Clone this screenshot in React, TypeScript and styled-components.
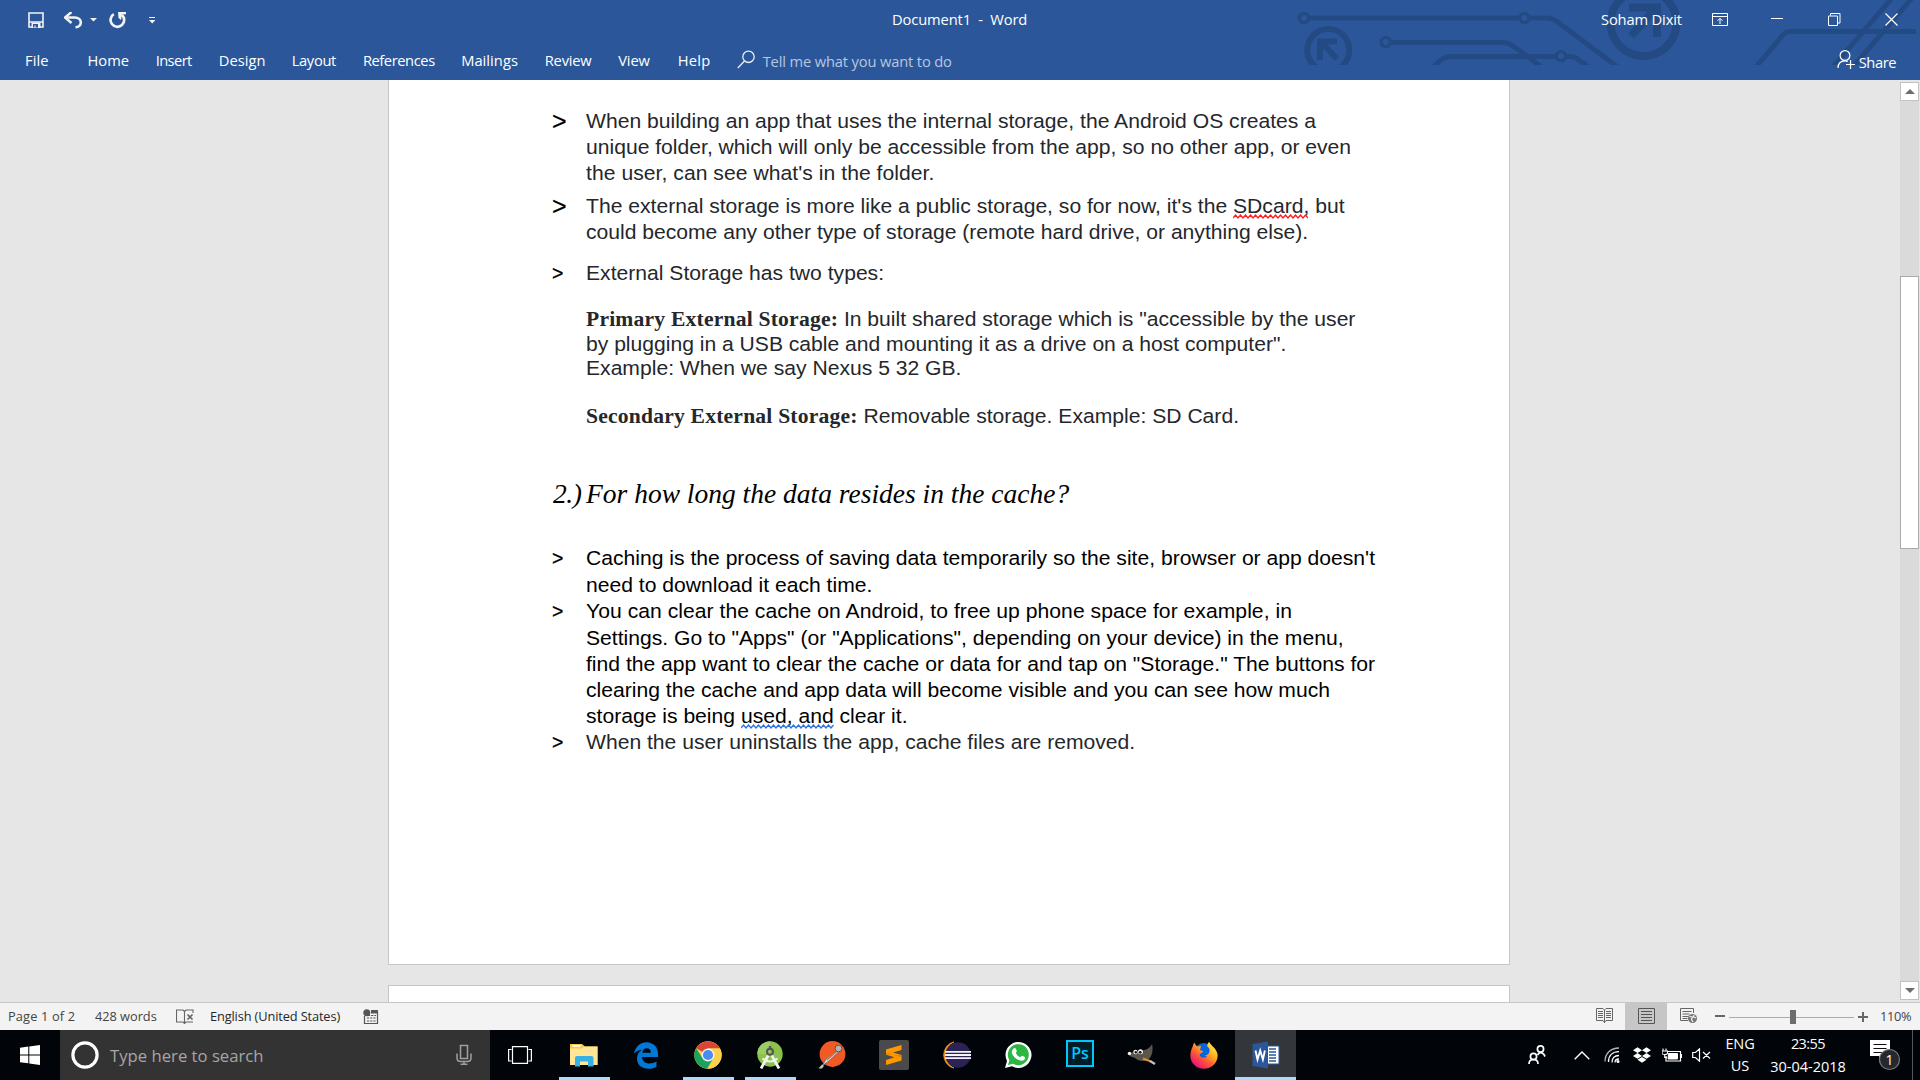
import React from "react";
import styled, { createGlobalStyle, css } from "styled-components";
import { FaDropbox } from "react-icons/fa";

const Global = createGlobalStyle`
  * { box-sizing: border-box; }
  html, body { margin: 0; padding: 0; overflow: hidden; background: #e6e6e6; }
  svg { display: block; flex: none; }
`;

const Screen = styled.div`
  width: 1920px;
  height: 1080px;
  display: grid;
  grid-template-rows: 80px 922px 28px 50px;
  overflow: hidden;
  font-family: "Open Sans", "Noto Sans", sans-serif;
`;

/* ---------- header ---------- */

const Header = styled.header`
  position: relative;
  display: grid;
  grid-template-rows: 39px 41px;
  background: #2b579a;
  color: #fff;
  font-size: 14.7px;
`;

const Circuit = styled.svg`
  position: absolute;
  left: 1290px;
  top: 0;
`;

const TitleBar = styled.div`
  position: relative;
  display: grid;
  grid-template-columns: 892px 709px 1fr;
  align-items: center;
  height: 38px;
`;

const QuickAccess = styled.div`
  display: flex;
  align-items: center;
  padding-left: 27px;
  margin-top: 2px;
`;

const Spacer = styled.div<{ $w: number }>`
  flex: none;
  width: ${(p) => p.$w}px;
`;

const Label = styled.span<{ $ls?: number; $size?: number; $dy?: number }>`
  white-space: pre;
  line-height: 20px;
  letter-spacing: ${(p) => p.$ls ?? 0}px;
  ${(p) => p.$size && css`font-size: ${p.$size}px;`}
  ${(p) => p.$dy && css`margin-top: ${p.$dy}px;`}
`;

const WindowControls = styled.div`
  display: flex;
  align-items: center;
`;

const TabRow = styled.nav`
  position: relative;
  display: flex;
  align-items: center;
  height: 40px;
  padding-left: 25px;
`;

const Tab = styled.span<{ $w: number; $ls: number }>`
  flex: none;
  width: ${(p) => p.$w}px;
  letter-spacing: ${(p) => p.$ls}px;
  line-height: 20px;
  white-space: nowrap;
  margin-top: 1px;
`;

const TellMe = styled.span`
  flex: none;
  width: 1081px;
  padding-left: 7px;
  margin-top: 3px;
  color: #b7c7e0;
  letter-spacing: -0.15px;
  line-height: 20px;
`;

/* ---------- document ---------- */

const Workspace = styled.main`
  display: grid;
  grid-template-columns: 388px 1122px 390px 20px;
  background: #e6e6e6;
  overflow: hidden;
`;

const Pages = styled.div`
  grid-column: 2;
  display: grid;
  grid-template-rows: 885px 17px;
  row-gap: 20px;
`;

const Page = styled.article<{ $next?: boolean }>`
  background: #fff;
  border: 1px solid #c6c6c6;
  ${(p) => (p.$next ? css`border-bottom: 0;` : css`border-top: 0; padding: 29px 0 0 164px;`)}
`;

const Entry = styled.section<{ $gap?: number; $color?: string }>`
  display: grid;
  grid-template-columns: 33px 1fr;
  margin-top: ${(p) => p.$gap ?? 0}px;
  color: ${(p) => p.$color ?? "#24272b"};
  font: 21.11px/24px "Liberation Sans", Arial, sans-serif;
`;

const Marker = styled.span<{ $large?: boolean }>`
  color: #000;
  margin-left: -1px;
  font-size: ${(p) => (p.$large ? 25 : 19.5)}px;
  line-height: ${(p) => (p.$large ? 24 : 25)}px;
  height: 24px;
  -webkit-text-stroke: 0.25px #000;
`;

const Text = styled.div`
  grid-column: 2;
`;

const Line = styled.div<{ $gap?: number; $ls?: number }>`
  height: 24px;
  white-space: nowrap;
  margin-top: ${(p) => p.$gap ?? 2}px;
  letter-spacing: ${(p) => p.$ls ?? 0}px;
  &:first-child { margin-top: 0; }
`;

const Term = styled.b`
  font: bold 21.6px/1 "Liberation Serif", "Times New Roman", serif;
  letter-spacing: 0.2px;
`;

const Heading = styled.h1`
  display: grid;
  grid-template-columns: 33px 1fr;
  margin: 51px 0 0;
  height: 30px;
  color: #000;
  font: italic 27.5px/30px "Liberation Serif", "Times New Roman", serif;
  white-space: nowrap;
`;

const HeadingNumber = styled.span`
  letter-spacing: -0.4px;
`;

const Proofed = styled.span`
  position: relative;
`;

const Wave = styled.svg`
  position: absolute;
  left: 0;
  top: 20px;
`;

const Scrollbar = styled.div`
  grid-column: 4;
  display: grid;
  grid-template-rows: 19px 1fr 19px;
  width: 19px;
  margin: 2px 0 2px;
  background: #dadada;
`;

const ScrollButton = styled.div`
  display: grid;
  place-items: center;
  background: #fff;
  border: 1px solid #c2c2c2;
`;

const Thumb = styled.div`
  height: 273px;
  margin-top: 175px;
  background: #fff;
  border: 1px solid #ababab;
`;

/* ---------- status bar ---------- */

const StatusBar = styled.footer`
  display: flex;
  align-items: center;
  background: #f3f3f3;
  border-top: 1px solid #c6c6c6;
  padding-left: 8px;
  color: #444;
  font-size: 12.8px;
`;

const StatusItem = styled.span<{ $w: number; $ls?: number; $dark?: boolean }>`
  flex: none;
  width: ${(p) => p.$w}px;
  margin-top: -2px;
  letter-spacing: ${(p) => p.$ls ?? 0}px;
  line-height: 20px;
  white-space: nowrap;
  color: ${(p) => (p.$dark ? "#262626" : "#444")};
`;

const ViewButton = styled.div<{ $active?: boolean }>`
  flex: none;
  width: 42px;
  height: 27px;
  display: grid;
  place-items: center;
  padding-bottom: 2px;
  background: ${(p) => (p.$active ? "#c6c6c6" : "transparent")};
`;

const Zoomer = styled.div`
  flex: none;
  display: flex;
  align-items: center;
  width: 165px;
  margin-left: 6px;
`;

/* ---------- taskbar ---------- */

const Taskbar = styled.div`
  display: flex;
  background: #010408;
  color: #fff;
`;

const Start = styled.div`
  width: 60px;
  display: grid;
  place-items: center;
`;

const Search = styled.div`
  width: 430px;
  display: flex;
  align-items: center;
  padding-left: 10px;
  background: #333;
  color: #a6a6a6;
  font-size: 16.7px;
`;

const SearchText = styled.span`
  width: 356px;
  padding-left: 10px;
`;

const TaskButton = styled.div<{ $open?: boolean; $active?: boolean; $w?: number }>`
  position: relative;
  flex: none;
  width: ${(p) => p.$w ?? 62}px;
  display: grid;
  place-items: center;
  background: ${(p) => (p.$active ? "#33373b" : "transparent")};
  &::after {
    content: "";
    display: ${(p) => (p.$open || p.$active ? "block" : "none")};
    position: absolute;
    bottom: 0;
    left: ${(p) => (p.$active ? 0 : 6)}px;
    right: ${(p) => (p.$active ? 0 : 5)}px;
    height: 3px;
    background: #a9dcfb;
  }
`;

const TaskView = styled(TaskButton)`
  padding-right: 3px;
`;

const Tray = styled.div`
  display: flex;
  align-items: center;
  margin-left: 228px;
`;

const TrayIcon = styled.div<{ $w: number }>`
  flex: none;
  width: ${(p) => p.$w}px;
  display: grid;
  place-items: center;
`;

const TrayText = styled.div<{ $w: number }>`
  flex: none;
  width: ${(p) => p.$w}px;
  display: flex;
  flex-direction: column;
  align-items: center;
  font-size: 14.7px;
  line-height: 22px;
  white-space: nowrap;
`;

const Peek = styled.div`
  width: 1px;
  height: 50px;
  margin-left: 11px;
  background: #55585c;
`;

const PsTile = styled.div`
  width: 28px;
  height: 27px;
  margin-top: -3px;
  border: 2px solid #00c8ff;
  background: #001d26;
  color: #00c8ff;
  font: 600 16px/22px "Open Sans", sans-serif;
  text-align: center;
`;

const tabs: [string, number, number][] = [
  ["File", 62.5, 0.1], ["Home", 68.2, 0], ["Insert", 63, -0.6], ["Design", 73, 0.05],
  ["Layout", 71.2, -0.33], ["References", 98.3, -0.42], ["Mailings", 83.6, 0.04],
  ["Review", 73.4, -0.22], ["View", 59.5, -0.1], ["Help", 59, 0.3],
];

function Squiggle({ w, color }: { w: number; color: string }) {
  let d = "M0 4";
  for (let x = 2.5, up = true; x <= w; x += 2.5, up = !up) d += `L${x} ${up ? 1 : 4}`;
  return (
    <Wave width={w} height="5">
      <path d={d} fill="none" stroke={color} strokeWidth="1.25" />
    </Wave>
  );
}

function HeaderArt() {
  return (
    <Circuit width="630" height="65" viewBox="1290 0 630 65" fill="none" stroke="#244a84" strokeWidth="5">
      <circle cx="1304" cy="18" r="4.6" strokeWidth="3.4" />
      <circle cx="1524.5" cy="18" r="4.6" strokeWidth="3.4" />
      <path d="M1309 18H1520M1529 18H1546Q1553 18 1559 23L1619 68" />
      <circle cx="1385.7" cy="42" r="4.6" strokeWidth="3.4" />
      <path d="M1391 42.5H1503Q1508 42.5 1513 46L1543 68M1432 68L1441 60Q1446 56.5 1451 56.5H1556" />
      <circle cx="1561" cy="56" r="4.6" strokeWidth="3.4" />
      <path d="M1566 56.5H1570Q1575 56.5 1579 60L1590 68" />
      <circle cx="1328.3" cy="50" r="21" strokeWidth="6" />
      <path d="M1320 60V41.5H1337M1321 42L1337 59" strokeWidth="6" />
      <circle cx="1643.5" cy="23" r="33" strokeWidth="8" />
      <path d="M1629 7.5H1657V37M1656 8L1631 36" strokeWidth="8" />
      <path d="M1755 68L1783 35Q1786 31.5 1790 31.5H1916M1832 68L1892 -2M1852 68L1912 -2" />
    </Circuit>
  );
}

const stroke = { fill: "none", stroke: "#fff", strokeWidth: 1.2 };

function Bullet({ large, gap, color, children }: { large?: boolean; gap?: number; color?: string; children: React.ReactNode }) {
  return (
    <Entry $gap={gap} $color={color}>
      <Marker $large={large}>&gt;</Marker>
      <Text>{children}</Text>
    </Entry>
  );
}

export default function App() {
  return (
    <Screen>
      <Global />
      <Header>
        <HeaderArt />
        <TitleBar>
          <QuickAccess>
            <svg width="18" height="18" viewBox="0 0 18 18"><path d="M2 2h14v14H2zM2 11h14" fill="none" stroke="#f3f3f3" strokeWidth="1.6" /><path d="M4.5 11.5h9V17h-9z" fill="#f3f3f3" /><path d="M6 13h5v3.5H8.5V14.2H7.5v2.3H6z" fill="#2b579a" /></svg>
            <Spacer $w={19} />
            <svg width="19" height="17" viewBox="0 0 19 17"><path d="M2 5.5h8.5c8.5 0 8 9.500 1 9.800" fill="none" stroke="#f3f3f3" strokeWidth="2.6" /><path d="M7.500 0L1 5.500l6.500 5.500" fill="none" stroke="#f3f3f3" strokeWidth="2.400" /></svg>
            <Spacer $w={7} />
            <svg width="7" height="4"><path d="M0 0h7L3.500 3.500z" fill="#f3f3f3" /></svg>
            <Spacer $w={12} />
            <svg width="18" height="17" viewBox="0 0 18 17"><path d="M4.800 2.200A6.800 6.800 0 1 0 13 3" fill="none" stroke="#f3f3f3" strokeWidth="2.700" /><path d="M9 0h8v2.200l-4 .3-1 5.500L9.500 6z" fill="#f3f3f3" /></svg>
            <Spacer $w={22} />
            <svg width="7" height="7"><path d="M0 .5h6" stroke="#f3f3f3" /><path d="M0 3h6.500L3.200 6.500z" fill="#f3f3f3" /></svg>
          </QuickAccess>
          <Label $ls={-0.12}>{"Document1  -  Word"}</Label>
          <WindowControls>
            <Label $ls={-0.15}>Soham Dixit</Label>
            <Spacer $w={30} />
            <svg width="16" height="13" viewBox="0 0 16 13" {...stroke} strokeWidth="1"><path d="M.5 .5h15v12H.5zM.5 3.500h15M8 11V5.500M5.500 7.800L8 5.300l2.500 2.500" /></svg>
            <Spacer $w={43} />
            <svg width="12" height="2"><path d="M0 .5h12" stroke="#fff" /></svg>
            <Spacer $w={45} />
            <svg width="13" height="13" {...stroke} strokeWidth="1"><path d="M.5 3h9v9.500h-9zM2.500 2.500v-2h9.500v9.500h-2" /></svg>
            <Spacer $w={44} />
            <svg width="13" height="13" {...stroke}><path d="M.5 .5l12 12M12.500 .5l-12 12" /></svg>
          </WindowControls>
        </TitleBar>
        <TabRow>
          {tabs.map(([t, w, ls]) => <Tab key={t} $w={w} $ls={ls}>{t}</Tab>)}
          <svg width="19" height="19" viewBox="0 0 19 19" fill="none" stroke="#e9eef6" strokeWidth="1.300"><circle cx="11.500" cy="6.800" r="5.700" /><path d="M7.500 11L.8 18" /></svg>
          <TellMe>Tell me what you want to do</TellMe>
          <svg width="19" height="19" viewBox="0 0 19 19" fill="none" stroke="#fff" strokeWidth="1.200"><circle cx="8" cy="5.500" r="4.900" /><path d="M1 18C1 13 4 10.800 8 10.800c1 0 2 .2 2.800 .7M13.500 10v9M9 14.500h9" /></svg>
          <Spacer $w={3} />
          <Label $ls={-0.4} $dy={5}>Share</Label>
        </TabRow>
      </Header>

      <Workspace>
        <Pages>
          <Page>
            <Bullet large>
              <Line>When building an app that uses the internal storage, the Android OS creates a</Line>
              <Line>unique folder, which will only be accessible from the app, so no other app, or even</Line>
              <Line $ls={0.045}>the user, can see what's in the folder.</Line>
            </Bullet>
            <Bullet large gap={9}>
              <Line>The external storage is more like a public storage, so for now, it's the <Proofed>SDcard,<Squiggle w={75} color="#ff1a1a" /></Proofed> but</Line>
              <Line $ls={-0.01}>could become any other type of storage (remote hard drive, or anything else).</Line>
            </Bullet>
            <Bullet gap={17}>
              <Line>External Storage has two types:</Line>
            </Bullet>
            <Entry $gap={22}>
              <Text>
                <Line $ls={-0.01}><Term>Primary External Storage:</Term> In built shared storage which is "accessible by the user</Line>
                <Line $gap={1} $ls={-0.01}>by plugging in a USB cable and mounting it as a drive on a host computer".</Line>
                <Line $gap={0}>Example: When we say Nexus 5 32 GB.</Line>
              </Text>
            </Entry>
            <Entry $gap={24}>
              <Text>
                <Line><Term>Secondary External Storage:</Term> Removable storage. Example: SD Card.</Line>
              </Text>
            </Entry>
            <Heading><HeadingNumber>2.)</HeadingNumber><span>For how long the data resides in the cache?</span></Heading>
            <Bullet gap={37} color="#000">
              <Line>Caching is the process of saving data temporarily so the site, browser or app doesn't</Line>
              <Line $gap={3}>need to download it each time.</Line>
            </Bullet>
            <Bullet gap={2} color="#000">
              <Line $ls={0.035}>You can clear the cache on Android, to free up phone space for example, in</Line>
              <Line $gap={3}>Settings. Go to "Apps" (or "Applications", depending on your device) in the menu,</Line>
              <Line>find the app want to clear the cache or data for and tap on "Storage." The buttons for</Line>
              <Line>clearing the cache and app data will become visible and you can see how much</Line>
              <Line>storage is being <Proofed>used, and<Squiggle w={94} color="#2f6fe0" /></Proofed> clear it.</Line>
            </Bullet>
            <Bullet gap={2}>
              <Line>When the user uninstalls the app, cache files are removed.</Line>
            </Bullet>
          </Page>
          <Page $next />
        </Pages>
        <Scrollbar>
          <ScrollButton><svg width="10" height="5"><path d="M5 0l5 5H0z" fill="#6d6d6d" /></svg></ScrollButton>
          <div><Thumb /></div>
          <ScrollButton><svg width="10" height="5"><path d="M0 0h10L5 5z" fill="#6d6d6d" /></svg></ScrollButton>
        </Scrollbar>
      </Workspace>

      <StatusBar>
        <StatusItem $w={87} $ls={0.15}>Page 1 of 2</StatusItem>
        <StatusItem $w={80.500} $ls={-0.04}>428 words</StatusItem>
        <svg width="18" height="16" viewBox="0 0 18 16" fill="none" stroke="#666" strokeWidth="1.100"><path d="M8.500 2.500L7 1H.5v12H7l1.500 1.500L10 13h7M8.500 2.500V15M8.500 2.500L10 1h7v3" /><path d="M11.500 5.500l5 5M16.500 5.500l-5 5" strokeWidth="1.700" /></svg>
        <Spacer $w={16.500} />
        <StatusItem $w={153} $ls={-0.13} $dark>English (United States)</StatusItem>
        <svg width="16" height="16" viewBox="0 0 16 16"><path d="M1.500 7v7.500h13V3" fill="none" stroke="#555" strokeWidth="1.200" /><circle cx="3.800" cy="3.800" r="3.500" fill="#555" /><path d="M8 1h7v3.500H8z" fill="#555" /><path d="M4 9h9M4 12h9M5 6.500h8" stroke="#555" strokeWidth="1.200" strokeDasharray="2.200 1" /></svg>
        <Spacer $w={1204} />
        <ViewButton><svg width="17" height="16" viewBox="0 0 17 16" fill="none" stroke="#666" strokeWidth="1"><path d="M8.500 2L7 .5H.5v12H7L8.500 14.500 10 12.500h6.500V.5H10zM8.500 2v13M2 3.500h5M2 5.500h5M2 7.500h5M2 9.500h5M10 3.500h5M10 5.500h5M10 7.500h5M10 9.500h5" /></svg></ViewButton>
        <ViewButton $active><svg width="17" height="16" fill="none" stroke="#555" strokeWidth="1"><path d="M.5 .5h16v15H.5zM3 3.500h11M3 6.500h11M3 9.500h11M3 12.500h11" /></svg></ViewButton>
        <ViewButton><svg width="17" height="16" viewBox="0 0 17 16"><path d="M8 12.500H.5V.5h13V5M2.500 3.500h9M2.500 6h7M2.500 8.500h6M2.500 10.500h5" fill="none" stroke="#666" /><circle cx="12.500" cy="10.500" r="4.500" fill="#777" /><path d="M9.500 8.500l3 .5-1 2.500 1.500 2.500M14 7l-.5 2 2.500 1" stroke="#f3f3f3" strokeWidth="1.200" fill="none" /></svg></ViewButton>
        <Zoomer>
          <svg width="154" height="16"><path d="M0 7h10M143 8h10M148 3v10" stroke="#666" strokeWidth="2" /><path d="M14 8.500h125" stroke="#ababab" /><path d="M75 1h6v14h-6z" fill="#6d6d6d" /></svg>
        </Zoomer>
        <StatusItem $w={34} $ls={-0.35}>110%</StatusItem>
      </StatusBar>

      <Taskbar>
        <Start>
          <svg width="20" height="20" fill="#fff"><path d="M0 2.800l8.300-1.200v7.800H0zM9.300 1.400L20 0v9.400H9.300zM0 10.400h8.300v7.900L0 17.200zM9.300 10.400H20V20L9.300 18.500z" /></svg>
        </Start>
        <Search>
          <svg width="30" height="30"><circle cx="15" cy="15" r="12.100" fill="none" stroke="#fff" strokeWidth="3.200" /></svg>
          <SearchText>Type here to search</SearchText>
          <svg width="16" height="22" viewBox="0 0 16 22" fill="none" stroke="#a0a0a0" strokeWidth="1.500"><path d="M4.500 1.500h7v13h-7zM1 9.500v4.500q0 3.500 3.500 3.500h7q3.500 0 3.500-3.500V9.500M8 17.500V20M4.500 20.300h7" /></svg>
        </Search>
        <TaskView $w={63}>
          <svg width="24" height="18" {...stroke}><path d="M4.500 .6h15v16.800h-15zM3.500 3.500H.6v11.500h2.900M20.500 3.500h2.900v11.500h-2.900" /></svg>
        </TaskView>
        <TaskButton $open>
          <svg width="28" height="24" viewBox="0 0 28 24"><path d="M0 1h12l3 2.500h12.500V22H0z" fill="#f5cb47" /><path d="M2.500 2h8v1.800h-8z" fill="#fff" /><path d="M0 5.500h12l2-2h13.500V22H0z" fill="#ffe694" /><path d="M5 23.500V15q0-2 2-2h14.500q2 0 2 2v8.500H18v-5h-8v5z" fill="#35b1e6" /></svg>
        </TaskButton>
        <TaskButton>
          <svg width="26" height="27" viewBox="0 0 26 27"><path d="M1 12C2.200 4.500 7.500 .3 13.500 .3c7 0 11.500 5 11.500 11.200V15H9c.3 4.500 3.800 6.500 7.500 6.500 2.700 0 5-.7 7-1.900v5.200c-2.300 1.400-5 2-8 2C8.500 26.800 4 22.500 4 16.500 4 12.500 6 9.500 9 7.700 5.500 8 2.500 9.500 1 12zM9.300 10.800h8.600c0-3-1.500-4.600-4.200-4.600-2.300 0-4 1.800-4.400 4.600z" fill="#0078d7" /></svg>
        </TaskButton>
        <TaskButton $open>
          <svg width="28" height="28" viewBox="0 0 28 28"><circle cx="14" cy="14" r="13.700" fill="#fbd04b" /><path d="M14 14L2.100 7.200A13.700 13.700 0 0 1 25.900 7.500H14z" fill="#dc4437" /><path d="M2.100 7.200A13.700 13.700 0 0 0 13.300 27.700L19.500 17 8.500 17z" fill="#1ba261" /><path d="M25.900 7.500H14L19.800 17 13.300 27.700A13.700 13.700 0 0 0 25.900 7.500z" fill="#fdd14c" /><circle cx="14" cy="14" r="6.500" fill="#f5f5f5" /><circle cx="14" cy="14" r="5.100" fill="#4c8bf5" /></svg>
        </TaskButton>
        <TaskButton $open>
          <svg width="28" height="28" viewBox="0 0 28 28"><circle cx="14" cy="13" r="12.700" fill="#8bc34a" /><path d="M14 .3A12.700 12.700 0 0 0 1.300 13H14z" fill="#9ccc65" /><path d="M12.500 14L5 27.500M15.500 14L23 27.500" stroke="#f2f2f2" strokeWidth="2.800" /><path d="M6.500 17.500q7.500 6 15 0" fill="none" stroke="#f2f2f2" strokeWidth="2" /><path d="M12.800 5h2.400v4h-2.400z" fill="#555" /><circle cx="14" cy="10.800" r="3" fill="none" stroke="#555" strokeWidth="2" /></svg>
        </TaskButton>
        <TaskButton>
          <svg width="28" height="28" viewBox="0 0 28 28"><circle cx="14.500" cy="13" r="12.900" fill="#f15a24" /><path d="M20 8.500L8 18l-4 7 7-5 10-9.500z" fill="#d8d8d8" stroke="#666" strokeWidth=".8" /><path d="M18.500 10.500L9 19" stroke="#f15a24" strokeWidth="1.200" /><path d="M.5 27.500l3.500-4 2 1.500-2 2.500z" fill="#c9c2bb" /><circle cx="20.500" cy="7.500" r="3.400" fill="#b5b5b5" stroke="#555" strokeWidth="1" /></svg>
        </TaskButton>
        <TaskButton>
          <svg width="30" height="30"><rect width="30" height="30" rx="2" fill="#4a4a4a" /><path d="M7 9.500L22.500 5v5L14 12.500l8.500 2.500v5.500L7 25v-5l8.500-2.700L7 14.800z" fill="#ff9800" /><path d="M7 14.800v-2l15.500 4.700V15z" fill="#c87300" opacity=".5" /></svg>
        </TaskButton>
        <TaskButton>
          <svg width="30" height="28" viewBox="0 0 30 28"><path d="M13 .8A13.600 13.600 0 0 0 13 27.200 15 15 0 0 1 13 .8z" fill="#f7941e" stroke="#f7941e" strokeWidth=".8" /><circle cx="17" cy="14" r="12.700" fill="#2c2255" /><path d="M4 10.800h26M4 14h26M4 17.200h26" stroke="#f4f2fa" strokeWidth="1.800" /></svg>
        </TaskButton>
        <TaskButton>
          <svg width="28" height="28" viewBox="0 0 28 28"><path d="M1 27l2-7A13 13 0 1 1 8 25.200z" fill="#fff" /><path d="M4 24l1.400-4.800a10.500 10.500 0 1 1 3.600 3.500z" fill="#2bb741" /><path d="M9.500 7.500c1-1 2-.7 2.400 .3l.9 2.200c.2 .7-1.100 1.700-1 2 1 2 2.300 3.300 4.400 4.100 .5 .2 1.500-1.600 2.200-1.300l2.300 1.100c1 .5 .3 2.700-1 3.400C15.500 21.500 7 15 7.800 10.500c.2-1.200 .9-2.200 1.700-3z" fill="#fff" /></svg>
        </TaskButton>
        <TaskButton><PsTile>Ps</PsTile></TaskButton>
        <TaskButton>
          <svg width="30" height="24" viewBox="0 0 30 24"><path d="M25 1c1.500 6 0 12-3 15-4 3.500-11 2-14-1-3-1-6-2-6-4 1-1 4-1 6-4 2 3 4 .5 6 .5 5 0 9-2.500 11-6.500z" fill="#5c554c" /><circle cx="2.500" cy="10.500" r="1.800" fill="#eee" /><circle cx="8.500" cy="9" r="2.200" fill="#f2f2f2" /><circle cx="13.500" cy="8.800" r="2.500" fill="#f2f2f2" /><circle cx="8.800" cy="9.300" r="1.200" fill="#111" /><circle cx="13.200" cy="9.300" r="1.400" fill="#111" /><path d="M16 15.500l8 3" stroke="#e0902f" strokeWidth="2" /><path d="M23 18l5 3" stroke="#b9c2c8" strokeWidth="2.400" /></svg>
        </TaskButton>
        <TaskButton>
          <svg width="28" height="28" viewBox="0 0 28 28">
            <defs><linearGradient id="fox" x1=".85" y1=".05" x2=".2" y2=".9"><stop offset="0" stopColor="#fff24d" /><stop offset=".4" stopColor="#ffa61f" /><stop offset=".7" stopColor="#ff4b3e" /><stop offset="1" stopColor="#e3177d" /></linearGradient></defs>
            <circle cx="14" cy="12.500" r="10.500" fill="#0a63d8" />
            <path d="M2.500 6L4 1.500 7 5.500 11 5l-1 4 3.500 1.500-4 3c1 4 5 4 8 2-1 0-2-.3-2.500-1 3-.5 5-2.500 4.500-6-.5-2-1.500-2.500-2.500-3.500C17.500 3.500 18.500 1.500 19 .5c1 3.500 7 6 8.500 12.500C28.500 21 22 27.700 14 27.700S-.5 21.500 .5 13C.7 10 1.500 8 2.500 6z" fill="url(#fox)" />
          </svg>
        </TaskButton>
        <TaskButton $active $w={61}>
          <svg width="28" height="28" viewBox="0 0 28 28"><path d="M15 5h12v18H15z" fill="#fff" stroke="#2b579a" strokeWidth="1" /><path d="M17 8h7M17 11h7M17 14h7M17 17h7M17 20h7" stroke="#2b579a" strokeWidth="1.300" /><path d="M.5 3L16 .5v27L.5 25z" fill="#2b579a" /><path d="M3.500 9.500l2 9 2.700-9 2.700 9 2-9" fill="none" stroke="#fff" strokeWidth="1.900" /></svg>
        </TaskButton>

        <Tray>
          <TrayIcon $w={26}><svg width="18" height="20" viewBox="0 0 18 20" {...stroke} strokeWidth="1.700"><circle cx="12.500" cy="4" r="3.100" /><path d="M9.500 10q3-4.500 6.500-.5l1 2" /><circle cx="5.500" cy="11.500" r="3.100" /><path d="M1 19q0-4.500 4.500-4.500T10 19" /></svg></TrayIcon>
          <Spacer $w={19} />
          <TrayIcon $w={26}><svg width="16" height="9" {...stroke} strokeWidth="1.400"><path d="M.7 8.300L8 1l7.300 7.300" /></svg></TrayIcon>
          <Spacer $w={4} />
          <TrayIcon $w={26}><svg width="16" height="16" viewBox="0 0 16 16" {...stroke} strokeWidth="1.300"><path d="M1 14.500C1 6.500 6.500 1 15 1" opacity=".7" /><path d="M4.500 15C4.500 8.500 8.500 4.700 15 4.700M8 15.500C8 11 10.500 8.500 15 8.500M11 15.500q0-3.500 4-3.500" /><circle cx="14" cy="14.500" r="1.500" fill="#fff" stroke="none" /></svg></TrayIcon>
          <Spacer $w={4} />
          <TrayIcon $w={26}><FaDropbox size={18} /></TrayIcon>
          <Spacer $w={4} />
          <TrayIcon $w={26}><svg width="21" height="15" viewBox="0 0 21 15"><path d="M6 3.500h12.500v9.500H4V8" fill="none" stroke="#fff" strokeWidth="1.200" /><path d="M6.500 5.500h9V11H6zM19.500 6v4" fill="#fff" stroke="#fff" /><path d="M1 .5v2.500M4 .5v2.500M0 3h5.500v2q0 1.500-2.800 1.500T0 5zM2.700 6v3.500H5" fill="none" stroke="#fff" strokeWidth="1.100" /></svg></TrayIcon>
          <Spacer $w={3} />
          <TrayIcon $w={26}><svg width="19" height="14" viewBox="0 0 19 14" {...stroke}><path d="M.7 4.500H3.500L7.500 .8v12.400L3.500 9.500H.7zM11 4l7 6.500M18 4l-7 6.500" /></svg></TrayIcon>
          <Spacer $w={6} />
          <TrayText $w={40}><Label $ls={-0.1} $size={14.500}>ENG</Label><Label $size={14.500} $dy={2}>US</Label></TrayText>
          <TrayText $w={96}><Label $ls={-0.55} $size={14.500}>23:55</Label><Label $ls={-0.03} $size={14.500} $dy={3}>30-04-2018</Label></TrayText>
          <Spacer $w={12} />
          <TrayIcon $w={33}><svg width="32" height="32" viewBox="0 0 32 32"><path d="M1 1h20v16h-7l-4 4v-4H1z" fill="#fff" /><path d="M4.500 5.500h13M4.500 9.500h13M4.500 13.500h9" stroke="#0a0c10" strokeWidth="1.200" /><circle cx="20.500" cy="20.500" r="10" fill="#25282c" stroke="#777" strokeWidth="1.200" /><text x="20.500" y="25.500" textAnchor="middle" fontSize="14" fill="#fff" fontFamily="Open Sans">1</text></svg></TrayIcon>
          <Peek />
        </Tray>
      </Taskbar>
    </Screen>
  );
}
